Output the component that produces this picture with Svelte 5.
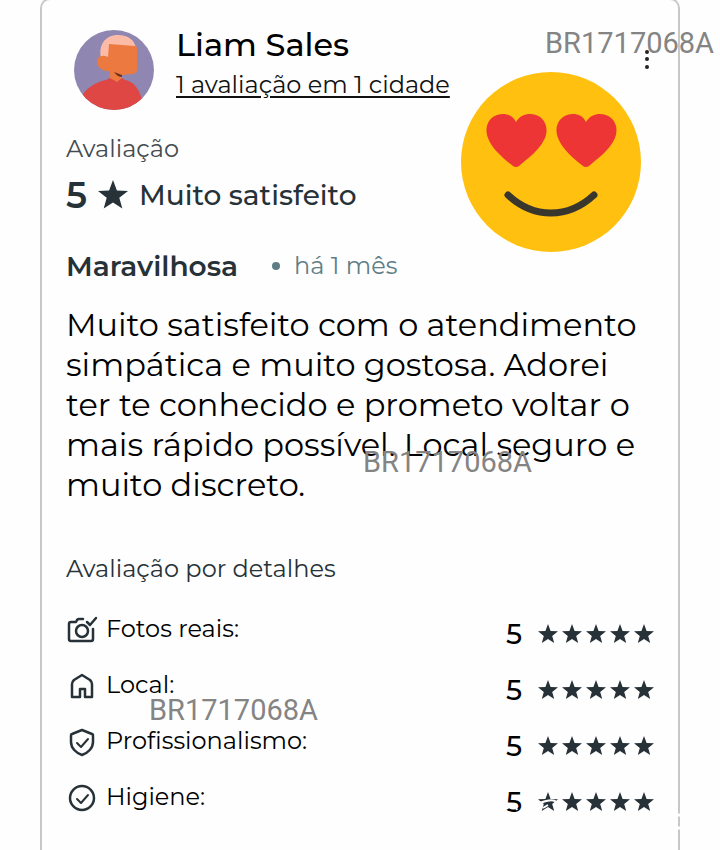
<script>
  const details = [
    { icon: "camera", label: "Fotos reais:", score: 5 },
    { icon: "home", label: "Local:", score: 5 },
    { icon: "shield", label: "Profissionalismo:", score: 5 },
    { icon: "check", label: "Higiene:", score: 5 },
  ];
  const code = "BR1717068A";
  const star =
    "M12 2l2.600 7 7.400.3-5.800 4.600 2 7.100-6.200-4-6.200 4 2-7.100L2 9.300l7.400-.3z";
</script>

<style>
  :global(body) {
    background: #fefefe;
    color: #263238;
    font-family: Montserrat, Inter, "Noto Sans", sans-serif;
  }
  .page {
    position: relative;
    overflow: hidden;
  }
  .card {
    box-sizing: border-box;
    min-height: calc(100vh + 2px);
    margin: -2px 40px 0;
    padding: 20px 22px 20px 24px;
    border: 2px solid #c8c8c8;
    border-bottom: none;
    border-radius: 10px 10px 0 0;
  }
  svg {
    display: block;
    flex: none;
  }
  h2,
  h3,
  p,
  ul {
    margin: 0;
    padding: 0;
  }
  .top {
    display: flex;
    justify-content: space-between;
  }
  .side {
    display: flex;
    flex-direction: column;
    align-items: flex-end;
    padding: 20px 1px 0 0;
  }
  .menu {
    display: flex;
    align-items: center;
    height: 32px;
    padding: 6px 0 0;
    border: none;
    background: none;
    cursor: pointer;
  }
  .emoji {
    margin-right: 14px;
  }
  .author {
    display: flex;
    align-items: center;
    gap: 22px;
    padding-left: 8px;
    color: #000;
  }
  .avatar {
    margin-top: 10px;
  }
  .author h2 {
    font-size: 32px;
    font-weight: 500;
    line-height: 40px;
  }
  .author a {
    display: block;
    color: #111;
    font-size: 24px;
    line-height: 40px;
    white-space: nowrap;
    text-underline-offset: 3px;
    text-decoration-thickness: 2px;
  }
  .caption {
    margin-top: 23px;
    color: #444b4e;
    font-size: 24px;
    line-height: 32px;
  }
  .rating {
    display: flex;
    align-items: center;
    gap: 8px;
    margin-top: 10px;
    font-size: 28px;
    font-weight: 500;
    line-height: 40px;
  }
  .rating strong {
    font-size: 36px;
    font-weight: 600;
  }
  .headline {
    display: flex;
    align-items: center;
    margin-top: 31px;
    line-height: 40px;
  }
  .headline h3 {
    font-size: 28px;
    font-weight: 600;
  }
  .dot {
    width: 8px;
    height: 8px;
    margin: 0 14px 0 34px;
    border-radius: 50%;
    background: #607d86;
  }
  time {
    color: #607d86;
    font-size: 24px;
  }
  .comment {
    margin-top: 19px;
    color: #000;
    font-size: 32px;
    line-height: 40px;
  }
  .details-title {
    margin-top: 48px;
    font-size: 24px;
    font-weight: 400;
    line-height: 32px;
  }
  .details {
    margin-top: 17px;
    list-style: none;
  }
  .details li {
    display: flex;
    align-items: center;
    height: 56px;
    color: #000;
    font-size: 24px;
  }
  .label {
    flex: 1;
    margin-left: 8px;
    padding-bottom: 4px;
  }
  .score {
    display: flex;
    align-items: center;
    padding-top: 8px;
    font-size: 28px;
    font-weight: 500;
  }
  .stars {
    display: flex;
    margin-left: 14px;
  }
  .watermark {
    position: absolute;
    color: #848484;
    font-family: Roboto, "Noto Sans", sans-serif;
    font-size: 29px;
    line-height: 32px;
    pointer-events: none;
  }
  .first {
    top: 27px;
    right: 6px;
  }
  .second {
    top: 446px;
    left: 363px;
  }
  .third {
    top: 694px;
    left: 149px;
  }
  .wear {
    position: absolute;
    top: 796px;
    right: 38px;
    pointer-events: none;
  }
</style>

<div class="page">
  <article class="card">
    <div class="top">
      <div>
        <header class="author">
          <svg class="avatar" width="80" height="80" viewBox="0 0 80 80" aria-hidden="true">
            <clipPath id="round"><circle cx="40" cy="40" r="40" /></clipPath>
            <g clip-path="url(#round)">
              <path fill="#8f86b2" d="M0 0h80v80H0z" />
              <path fill="#fbbba6" d="M27 29C24 15 31 5 44 5c10 0 17 5 18 14L38 32z" />
              <path fill="#ec7a40" d="M35 14l26 2q2 0 2 2v21q0 5-5 5l-10 1v7l-5 6-8-6 1-11c-6 1-12-3-13-8-1-6 5-9 11-6z" />
              <path fill="#6f2f22" d="M40 42l8 3v2c-3 0-6-2-8-5z" />
              <path fill="#df4745" d="M6 69c5-10 15-17 26-19l4-2 7 4 5-4 3 2c7 1 14 7 17 20v10H6z" />
            </g>
          </svg>
          <div>
            <h2>Liam Sales</h2>
            <a href="#avaliacoes">1 avaliação em 1 cidade</a>
          </div>
        </header>
        <p class="caption">Avaliação</p>
        <p class="rating">
          <strong>5</strong>
          <svg width="36" height="36" viewBox="0 0 24 24" fill="#263238"><path d={star} /></svg>
          <span>Muito satisfeito</span>
        </p>
        <div class="headline">
          <h3>Maravilhosa</h3>
          <span class="dot"></span>
          <time>há 1 mês</time>
        </div>
      </div>
      <div class="side">
        <button class="menu" aria-label="Mais opções">
          <svg width="16" height="24" viewBox="0 0 16 24" fill="#222">
            <circle cx="8" cy="5" r="2" />
            <circle cx="8" cy="12" r="2" />
            <circle cx="8" cy="20" r="2" />
          </svg>
        </button>
        <svg class="emoji" width="180" height="180" viewBox="0 0 180 180" aria-hidden="true">
          <circle cx="90" cy="90" r="90" fill="#ffc010" />
          <g fill="#ee3535">
            <path id="heart" d="M55 50C60 42 68 41 75 43c9 3 13 13 9 23-5 12-18 21-26 28q-3 2-6 0C43 87 31 77 27 66c-4-10 0-20 9-23 7-2 15-1 19 7z" />
            <use href="#heart" x="70" />
          </g>
          <path d="M47 123c26 24 60 24 86 0" fill="none" stroke="#39362d" stroke-width="7" stroke-linecap="round" />
        </svg>
      </div>
    </div>

    <p class="comment">
      Muito satisfeito com o atendimento simpática e muito gostosa. Adorei
      ter te conhecido e prometo voltar o mais rápido possível. Local seguro e
      muito discreto.
    </p>

    <h3 class="details-title">Avaliação por detalhes</h3>
    <ul class="details">
      {#each details as item}
        <li>
          <svg width="32" height="32" viewBox="0 0 32 32" fill="none" stroke="#263238" stroke-width="2.500" stroke-linecap="round" stroke-linejoin="round">
            {#if item.icon === "camera"}
              <path d="M17 5h-4q-1 0-2 1L10 8H5Q3 8 3 10V25Q3 27 5 27H25Q27 27 27 25V15M21 8l3 3 6-7" />
              <circle cx="16" cy="17" r="6" />
            {:else if item.icon === "home"}
              <path d="M6 27V14q0-2 2-4l8-5 8 5q2 2 2 4V27H19V19H14V27Z" />
            {:else if item.icon === "shield"}
              <path d="M16 4l10 4q1 0 1 2v6c0 6-5 11-11 13C10 27 5 22 5 16v-6q0-2 1-2z" />
              <path d="M11 17l4 4 7-8" stroke-width="2" />
            {:else}
              <circle cx="16" cy="16" r="12" />
              <path d="M11 17l4 4 7-8" stroke-width="2" />
            {/if}
          </svg>
          <span class="label">{item.label}</span>
          <span class="score">
            {item.score}
            <span class="stars">
              {#each Array(item.score) as _}
                <svg width="24" height="24" viewBox="0 0 24 24" fill="#263238"><path d={star} /></svg>
              {/each}
            </span>
          </span>
        </li>
      {/each}
    </ul>
  </article>

  <span class="watermark first">{code}</span>
  <span class="watermark second">{code}</span>
  <span class="watermark third">{code}</span>

  <!-- faded strokes over the last row and the card edge -->
  <svg class="wear" width="178" height="40" viewBox="0 0 178 40" fill="none" stroke="#fefefe" stroke-width="2" aria-hidden="true">
    <path d="M2 13l5-3M11 9l2 5M36 7q10-4 15-2 5 3 4 11M39 12l5-3" />
    <path d="M174 19h4M174 32h4" stroke-width="3" />
  </svg>
</div>
